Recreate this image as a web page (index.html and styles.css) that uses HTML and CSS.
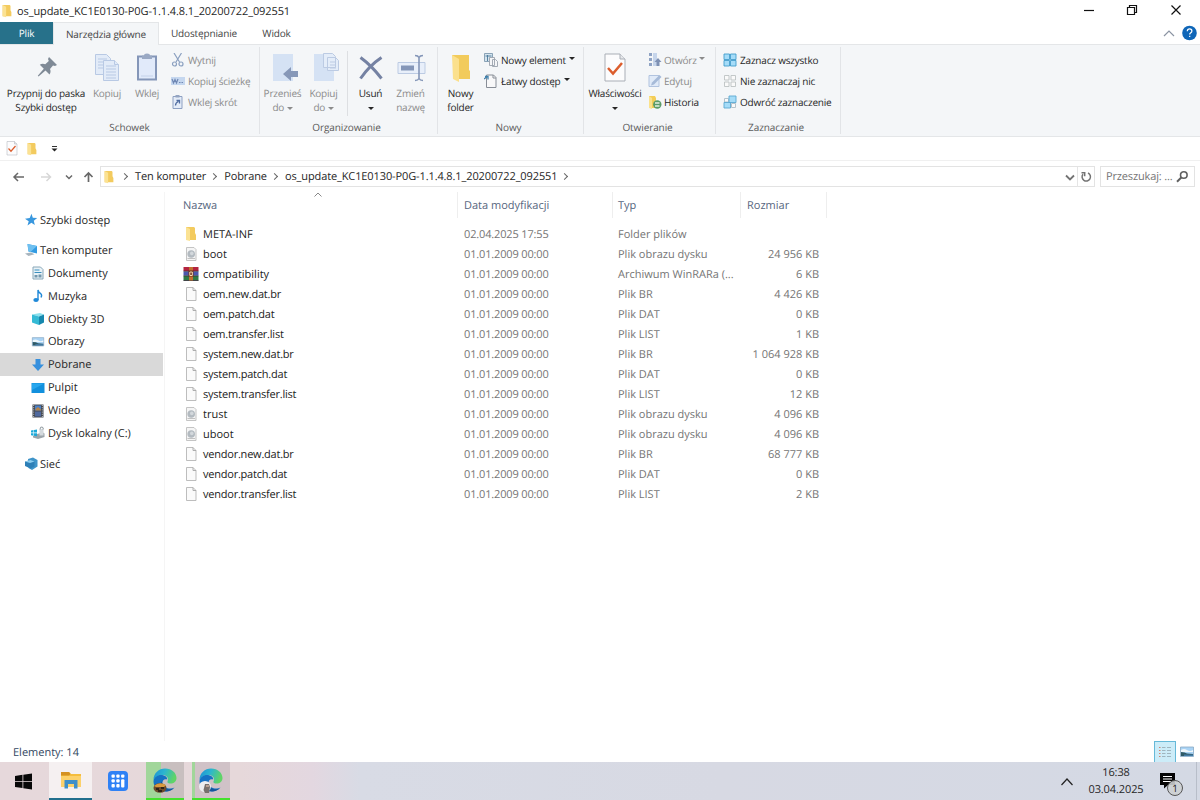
FILE: index.html
```html
<!DOCTYPE html>
<html lang="pl">
<head>
    <meta charset="UTF-8">
    <meta name="viewport" content="width=device-width, initial-scale=1.0">
    <title>os_update_KC1E0130-P0G-1.1.4.8.1_20200722_092551</title>
    <link rel="stylesheet" href="styles.css">
</head>
<body>
    <!-- Shared icons -->
    <svg class="sprites" width="0" height="0">
        <linearGradient id="edgeTop" x1="0" y1="0" x2="1" y2=".3">
            <stop offset="0" stop-color="#1c8fd6"/>
            <stop offset=".5" stop-color="#2cb5cf"/>
            <stop offset="1" stop-color="#5fd467"/>
        </linearGradient>
        <symbol id="folder" viewBox="0 0 16 16">
            <path d="M3 1h8l1 1v5l1 2v5H3z" fill="#f3cb5f"/>
            <path d="M3 1l4 2v12l-4-1z" fill="#fbe293"/>
        </symbol>
        <symbol id="file" viewBox="0 0 16 16">
            <path d="M3.500 1.500h6.500l3 3v10h-9.500z" fill="#fafafa" stroke="#b5b5b5" stroke-width=".9"/>
            <path d="M10 1.500v3h3" fill="none" stroke="#a5a5a5" stroke-width=".9"/>
        </symbol>
        <symbol id="disc" viewBox="0 0 16 16">
            <path d="M3.500 1.500h7.500l2 2v11h-9.500z" fill="#f5f5f5" stroke="#bdbdbd" stroke-width=".9"/>
            <circle cx="8.200" cy="8" r="3.800" fill="#b3bac0"/>
            <circle cx="8.800" cy="7.400" r="1.800" fill="#d3d8dc"/>
            <path d="M4.500 12.500h7.500" stroke="#c2c2c2"/>
        </symbol>
        <symbol id="rar" viewBox="0 0 16 16">
            <path d="M.5 1h15v4H.5z" fill="#b4243f"/>
            <path d="M.5 5.500h15v4H.5z" fill="#4a58ad"/>
            <path d="M.5 10h15v4.500H.5z" fill="#2f7a44"/>
            <path d="M.5 5.200h15M.5 9.800h15M.5 14.500h15" stroke="#2b2530" stroke-width=".8"/>
            <path d="M6 1h4v13.500H6z" fill="#c2702f"/>
            <path d="M5.500 4.500h5v6h-5z" fill="#6b2d20"/>
            <path d="M6.800 6h2.500v3.500h-2.500z" fill="none" stroke="#f7dfae"/>
        </symbol>
        <symbol id="picture" viewBox="0 0 16 16">
            <path d="M1.500 3h13v9.500h-13z" fill="#a9d3f5" stroke="#8aa9c4" stroke-width=".8"/>
            <path d="M2 6q3-2 6 0t6 0v2H2z" fill="#eef6fb"/>
            <path d="M2 8q4 0 6 1.500l6 .5v2H2z" fill="#2f5a66"/>
            <path d="M5 11.200h9" stroke="#4d8bc4"/>
        </symbol>
        <symbol id="doc-check" viewBox="0 0 24 30">
            <path d="M2 1h15l5 5v22H2z" fill="#fcfcfd" stroke="#a9aeb6" stroke-width="1"/>
            <path d="M17 1v5h5" fill="#e6e8eb" stroke="#a9aeb6"/>
            <path d="M5 15l5 5.500L19 10" fill="none" stroke="#dc5d2d" stroke-width="2.500"/>
        </symbol>
        <symbol id="edge" viewBox="0 0 24 24">
            <path d="M.5 12C.5 5 6 .5 12 .5c7 0 11.500 4.500 11.500 9.500 0 3.500-2.500 5.500-6 5.500-3 0-3.500-1.200-2.700-2.700C16 9 12.500 6.500 8.500 7 4.500 7.500 2 9.500.5 12z" fill="url(#edgeTop)"/>
            <path d="M.5 13C1 9 5 6.500 9 7c3.500.5 5.500 2.500 5.200 4.500C11 10.500 9 13 9.500 15.500c.7 3.500 4 5 8 5 1.500 0 2.800-.3 4-.9C19.500 22 16 23.500 12 23.500 5.500 23.500.2 19 .5 13z" fill="#1572c4"/>
            <path d="M9.200 13c-1.500 4.500 2.500 8.500 8.300 8.300 1.500 0 2.800-.5 4-1.700-2 2.700-5.500 3.900-8.500 3.900-5-.7-7.500-6.500-3.800-10.500z" fill="#16559a"/>
        </symbol>
    </svg>

    <div class="window">
        <header class="titlebar">
            <svg class="title-icon" width="14" height="14"><use href="#folder"/></svg>
            <span class="title">os_update_KC1E0130-P0G-1.1.4.8.1_20200722_092551</span>
            <svg class="controls" width="112" height="22" viewBox="0 0 112 22" fill="none" stroke="#111">
                <path d="M1 10.500h10" stroke-width="1.200"/>
                <path d="M44.500 7.500h7v7h-7zM46.500 7.500v-2h7v7h-2" stroke-width="1.200"/>
                <path d="M88.500 5.500l9 9M97.500 5.500l-9 9" stroke-width="1.200"/>
            </svg>
        </header>

        <nav class="tabs">
            <span class="tab tab-file">Plik</span>
            <span class="tab tab-active">Narzędzia główne</span>
            <span class="tab tab-share">Udostępnianie</span>
            <span class="tab tab-view">Widok</span>
            <svg class="tab-tools" width="36" height="18" viewBox="0 0 36 18">
                <path d="M1 12l5-5 5 5" fill="none" stroke="#8b94a3" stroke-width="1.200"/>
                <circle cx="26.500" cy="9" r="7.300" fill="#0f66b8"/>
                <path d="M24.300 7.300q0-2.500 2.300-2.500t2.300 2.200q0 1.300-1.300 1.900-.9.500-.9 1.600M26.700 11.800v1.300" fill="none" stroke="#fff" stroke-width="1.200"/>
            </svg>
        </nav>

        <section class="ribbon">
            <div class="group clipboard">
                <div class="group-body">
                    <div class="big pin">
                        <svg width="32" height="34" viewBox="0 0 32 34">
                            <path d="M19 6l8 8-2 1-2-.5-3 3.500c1 2 .5 4-.5 5.500l-4-4-7 6-.7-.7 6-7-4-4c1.500-1.300 3.500-1.500 5.500-.6l3.500-3.200-.8-2z" fill="#7f8a96"/>
                        </svg>
                        <span>Przypnij do paska<br>Szybki dostęp</span>
                    </div>
                    <div class="big copy off">
                        <svg width="32" height="34" viewBox="0 0 32 34" fill="#e2ebf8" stroke="#b8c9e4">
                            <path d="M4.500 3.500h11l4 4v16h-15z"/>
                            <path d="M7 8h9M7 11h9M7 14h9M7 17h9"/>
                            <path d="M12.500 9.500h11l4 4v16h-15z"/>
                            <path d="M23.500 9.500v4h4M15 15h10M15 18h10M15 21h10M15 24h10M15 27h10"/>
                        </svg>
                        <span>Kopiuj</span>
                    </div>
                    <div class="big paste off">
                        <svg width="32" height="34" viewBox="0 0 32 34">
                            <path d="M7 5.500h18v23H7z" fill="#e1eafa" stroke="#8496b8" stroke-width="2"/>
                            <path d="M11 4.500h2q0-2 3-2t3 2h2v3.500H11z" fill="#9aa9c4"/>
                            <path d="M10 25h12" stroke="#c4d2ea"/>
                        </svg>
                        <span>Wklej</span>
                    </div>
                    <div class="stack">
                        <div class="small off">
                            <svg width="14" height="14" viewBox="0 0 14 14" fill="none" stroke="#8ba0c0" stroke-width="1.200">
                                <path d="M3 0l5.500 9M10.500 0L5 9"/><circle cx="3.500" cy="11" r="2"/><circle cx="10" cy="11" r="2"/>
                            </svg>
                            <span>Wytnij</span>
                        </div>
                        <div class="small off">
                            <svg width="14" height="14" viewBox="0 0 14 14">
                                <path d="M0 3h14v8H0z" fill="#c5d7ef"/>
                                <path d="M1 5l1.500 4L4 5.500 5.500 9 7 5M8 8.500h1.500M10.500 8.500H12" fill="none" stroke="#7088b4" stroke-width="1.200"/>
                            </svg>
                            <span>Kopiuj ścieżkę</span>
                        </div>
                        <div class="small off">
                            <svg width="14" height="14" viewBox="0 0 14 14">
                                <path d="M2 1.500h9v12H2z" fill="#e4ecf8" stroke="#8da0c2"/>
                                <path d="M4.500 0h4v2.500h-4z" fill="#94a5c2"/>
                                <path d="M4.500 10.500q0-3 3-4M5.500 5.500h3v3" fill="none" stroke="#4e6b9f" stroke-width="1.300"/>
                            </svg>
                            <span>Wklej skrót</span>
                        </div>
                    </div>
                </div>
                <div class="group-name">Schowek</div>
            </div>

            <div class="group organize">
                <div class="group-body">
                    <div class="big move off">
                        <svg width="32" height="34" viewBox="0 0 32 34">
                            <path d="M6 3h20v27H6z" fill="#d5e2f4"/>
                            <path d="M16 23l8-7v4h7v6h-7v4z" fill="#8798b8"/>
                        </svg>
                        <span>Przenieś<br>do <i class="caret"></i></span>
                    </div>
                    <div class="big copyto off">
                        <svg width="32" height="34" viewBox="0 0 32 34">
                            <path d="M6 3h20v27H6z" fill="#d5e2f4"/>
                            <path d="M15.500 2.500h9l3 3v11h-12zM19.500 6.500h8l3 3v10h-11z" fill="#e4edf9" stroke="#bccbe3"/>
                            <path d="M22 11h6M22 14h6M22 17h6" stroke="#bccbe3"/>
                        </svg>
                        <span>Kopiuj<br>do <i class="caret"></i></span>
                    </div>
                    <div class="divider"></div>
                    <div class="big delete">
                        <svg width="32" height="34" viewBox="0 0 32 34">
                            <path d="M5.500 6.500q11 8 21 21M26.500 6.500q-12 8-21 21" fill="none" stroke="#7582a3" stroke-width="3"/>
                        </svg>
                        <span>Usuń<br><i class="caret"></i></span>
                    </div>
                    <div class="big rename off">
                        <svg width="32" height="34" viewBox="0 0 32 34">
                            <path d="M3 11.500h27v11H3z" fill="#e8effa" stroke="#bccbe3"/>
                            <path d="M6 14.500h13v5H6z" fill="#8496b8"/>
                            <path d="M20 4.500q3 0 4 2 1-2 4-2M24 6.500v21M20 29.500q3 0 4-2 1 2 4 2" fill="none" stroke="#8496b8" stroke-width="1.600"/>
                        </svg>
                        <span>Zmień<br>nazwę</span>
                    </div>
                </div>
                <div class="group-name">Organizowanie</div>
            </div>

            <div class="group new">
                <div class="group-body">
                    <div class="big newfolder">
                        <svg width="32" height="34" viewBox="0 0 32 34">
                            <path d="M7 4h17v15l1 1v8H12z" fill="#f2cb5c"/>
                            <path d="M7 4l7 4v23l-6-3z" fill="#fbe08c"/>
                        </svg>
                        <span>Nowy<br>folder</span>
                    </div>
                    <div class="stack">
                        <div class="small">
                            <svg width="14" height="14" viewBox="0 0 14 14" stroke-width=".9">
                                <path d="M.5.5h8v8h-8z" fill="#d5e4ee" stroke="#7f9bb0"/>
                                <path d="M1.500 3h6M3.500 2v6" stroke="#4b7898"/>
                                <path d="M5.500 4.500h5v8h-5zM8.500 6.500h3l2 2v5h-5z" fill="#f5f6f8" stroke="#9ba3ad"/>
                            </svg>
                            <span>Nowy element</span><i class="caret"></i>
                        </div>
                        <div class="small">
                            <svg width="14" height="14" viewBox="0 0 14 14">
                                <path d="M2.500 1h7l2.500 2.500v10H2.500z" fill="#f8f8f9" stroke="#888e97"/>
                                <path d="M9 1v3h3" fill="none" stroke="#888e97"/>
                                <path d="M0 5l4-3M1 2.500h3v3" fill="none" stroke="#3f81ac" stroke-width="1.300"/>
                            </svg>
                            <span>Łatwy dostęp</span><i class="caret"></i>
                        </div>
                    </div>
                </div>
                <div class="group-name">Nowy</div>
            </div>

            <div class="group open">
                <div class="group-body">
                    <div class="big props">
                        <svg width="24" height="34" viewBox="0 0 24 30"><use href="#doc-check"/></svg>
                        <span>Właściwości<br><i class="caret"></i></span>
                    </div>
                    <div class="stack">
                        <div class="small off">
                            <svg width="14" height="14" viewBox="0 0 14 14">
                                <path d="M1 0h3v3H1zM1 5h3v3H1zM1 10h3v3H1z" fill="#8fa3c4"/>
                                <path d="M5 0h4v13H5z" fill="#c6d5eb"/>
                                <path d="M10 5l3.500 4h-2v4h-3V9h-2z" fill="#7e91b4"/>
                            </svg>
                            <span>Otwórz</span><i class="caret"></i>
                        </div>
                        <div class="small off">
                            <svg width="14" height="14" viewBox="0 0 14 14">
                                <path d="M1 1.500h10v11H1z" fill="#e0eaf8" stroke="#b1c3df"/>
                                <path d="M3 11.500l1-3 7.500-7.500 2 2L6 10.500z" fill="#a6bad8"/>
                            </svg>
                            <span>Edytuj</span>
                        </div>
                        <div class="small">
                            <svg width="14" height="14" viewBox="0 0 14 14">
                                <path d="M1 1h6l1 2v10H1z" fill="#f3cd58"/>
                                <path d="M1 1l3 2v11l-3-1z" fill="#fbe28c"/>
                                <circle cx="9.300" cy="9.500" r="4.200" fill="#5a9b68"/>
                                <path d="M7 8h4.500M7 11h4.500" stroke="#e3efdf" stroke-width="1.300"/>
                            </svg>
                            <span>Historia</span>
                        </div>
                    </div>
                </div>
                <div class="group-name">Otwieranie</div>
            </div>

            <div class="group select">
                <div class="group-body">
                    <div class="stack">
                        <div class="small">
                            <svg width="14" height="14" viewBox="0 0 14 14"><path d="M1 1h5.500v5.500H1zM7.500 1H13v5.500H7.500zM1 7.500h5.500V13H1zM7.500 7.500H13V13H7.500z" fill="#a5dcf8" stroke="#449dcc" stroke-width=".9"/></svg>
                            <span>Zaznacz wszystko</span>
                        </div>
                        <div class="small">
                            <svg width="14" height="14" viewBox="0 0 14 14"><path d="M1.500 1.500h4.500V6H1.500zM8 1.500h4.500V6H8zM1.500 8H6v4.500H1.500zM8 8h4.500v4.500H8z" fill="#fafafa" stroke="#bcc2c3" stroke-width=".9"/></svg>
                            <span>Nie zaznaczaj nic</span>
                        </div>
                        <div class="small">
                            <svg width="14" height="14" viewBox="0 0 14 14">
                                <path d="M1.500 3.500h4V7h-4zM8.500 8.500h4v4h-4z" fill="#fafafa" stroke="#b5c3cc"/>
                                <path d="M6 1h7v6.500H6zM1 7.500h6.500V13H1z" fill="#a5dcf8" stroke="#5ba8d1" stroke-width=".9"/>
                            </svg>
                            <span>Odwróć zaznaczenie</span>
                        </div>
                    </div>
                </div>
                <div class="group-name">Zaznaczanie</div>
            </div>
        </section>

        <div class="quickbar">
            <svg width="14" height="15" viewBox="0 0 24 30"><use href="#doc-check"/></svg>
            <svg width="16" height="14"><use href="#folder"/></svg>
            <svg width="7" height="6" viewBox="0 0 7 6"><path d="M1 .5h5" stroke="#333"/><path d="M.5 2.500h6l-3 3z" fill="#222"/></svg>
        </div>

        <div class="navbar">
            <svg class="nav-arrows" width="100" height="20" viewBox="0 0 100 20" fill="none" stroke="#686868" stroke-width="1.500">
                <path d="M14 10h10M18 6l-4 4 4 4"/>
                <path d="M41 10h9M46.500 6l4 4-4 4" stroke="#d7d7d7"/>
                <path d="M66 8.500l3 3 3-3"/>
                <path d="M88.500 15V6M84.500 10l4-4 4 4" stroke-width="1.700"/>
            </svg>
            <div class="address">
                <svg width="14" height="14"><use href="#folder"/></svg>
                <b class="chev"></b><span>Ten komputer</span>
                <b class="chev"></b><span>Pobrane</span>
                <b class="chev"></b><span>os_update_KC1E0130-P0G-1.1.4.8.1_20200722_092551</span>
                <b class="chev"></b>
                <svg class="address-tools" width="31" height="20" viewBox="0 0 31 20" fill="none" stroke="#737373" stroke-width="1.800">
                    <path d="M3 8.500l4 4 4-4"/>
                    <path d="M14.500 0v20" stroke="#e5e5e5" stroke-width="1"/>
                    <path d="M25 6a4.200 4.200 0 1 1-5 1.200M18.500 5.700h3.200v3.500" stroke-width="1.500"/>
                </svg>
            </div>
            <div class="search">
                <span>Przeszukaj: ...</span>
                <svg width="13" height="13" viewBox="0 0 13 13" fill="none" stroke="#606060"><circle cx="7.800" cy="5" r="3.300" stroke-width="1.600"/><path d="M5.500 7.300L1 11.800" stroke-width="2"/></svg>
            </div>
        </div>

        <main class="content">
            <aside class="sidebar">
                <div class="place root">
                    <svg width="14" height="14" viewBox="0 0 14 14"><path d="M7.500.8l1.300 4 4.400.1-3.400 2.800 1 4.300-3.400-2.300L3.500 12.500l1.200-4.300L1 5.800l4.700-.7z" fill="#3897de"/></svg>
                    <span>Szybki dostęp</span>
                </div>
                <div class="place root pc">
                    <svg width="14" height="14" viewBox="0 0 14 14"><path d="M3.500 1l9.500 2v7.500L4.500 8.500z" fill="#329be2"/><path d="M3.500 1l9.500 2-6.500 6-2-.5z" fill="#6fc0f0"/><path d="M1 10.500l6-1 3.500 1.800-6 1.700z" fill="#a8b4bd"/></svg>
                    <span>Ten komputer</span>
                </div>
                <div class="place">
                    <svg width="14" height="14" viewBox="0 0 14 14"><path d="M2 1h7.500L12 3.500V13H2z" fill="#e9f2f7" stroke="#89a7b8"/><path d="M3.500 4h5M3.500 6.500h7" stroke="#3a8fbe"/><path d="M3.500 9h3v2.500h-3zM7.500 8.500h3v3h-3z" fill="#7397ad"/></svg>
                    <span>Dokumenty</span>
                </div>
                <div class="place">
                    <svg width="14" height="14" viewBox="0 0 14 14"><ellipse cx="5" cy="11" rx="2.700" ry="2" fill="#2089d8"/><path d="M7 11V1q.5 2.500 2.800 3.700 1.500 1.500.2 3.800" fill="none" stroke="#2089d8" stroke-width="1.400"/></svg>
                    <span>Muzyka</span>
                </div>
                <div class="place">
                    <svg width="14" height="14" viewBox="0 0 14 14"><path d="M1 2.500l8-1.500 4 1.500-5 2z" fill="#8be0ed"/><path d="M1 2.500l7 2V13l-7-2.500z" fill="#35bad5"/><path d="M8 4.500l5-2v8L8 13z" fill="#1688ae"/></svg>
                    <span>Obiekty 3D</span>
                </div>
                <div class="place"><svg width="14" height="14"><use href="#picture"/></svg><span>Obrazy</span></div>
                <div class="place selected">
                    <svg width="14" height="14" viewBox="0 0 14 14"><path d="M4.500 1h5v5.500H13L7 13 1 6.500h3.500z" fill="#3790dd"/></svg>
                    <span>Pobrane</span>
                </div>
                <div class="place">
                    <svg width="14" height="14" viewBox="0 0 14 14"><path d="M.5 2h13v10H.5z" fill="#1290dd"/><path d="M1 2.500h12L1 9z" fill="#28a7ee"/></svg>
                    <span>Pulpit</span>
                </div>
                <div class="place">
                    <svg width="14" height="14" viewBox="0 0 14 14"><path d="M1.500.5h11v13h-11z" fill="#42474f"/><path d="M4 1.500h6v5H4z" fill="#4b80c6"/><path d="M4 7.500h6v5H4z" fill="#50699e"/><path d="M4.500 5L7 3l3 2.500v1H4.500z" fill="#b3834a"/><path d="M2.700 1v12M11.300 1v12" stroke="#c4c8cd" stroke-dasharray="1 1.200"/></svg>
                    <span>Wideo</span>
                </div>
                <div class="place">
                    <svg width="14" height="14" viewBox="0 0 14 14"><path d="M6 8l6-1.500 1.500 1V11L7 13l-5-1.500V10z" fill="#9ba4aa"/><path d="M8.500 3h4v6.500h-4z" fill="#d3d9dd"/><path d="M9 3.500q0-3 2-2.500t1 2.500" fill="none" stroke="#8e989e"/><path d="M0 4.500l2.500-.4v2.500H0zM3 4l3-.5v3H3zM0 7.200h2.500v2.500L0 9.300zM3 7.200h3v3L3 9.800z" fill="#1ba8d8"/></svg>
                    <span>Dysk lokalny (C:)</span>
                </div>
                <div class="place root net">
                    <svg width="14" height="14" viewBox="0 0 14 14"><path d="M4 2l5-1.500L13.500 3v6.500L8 13 4.500 11z" fill="#3f94c9"/><path d="M1 4.500L6.500 3l4 1.500v5l-4 2L1 9z" fill="#2d7fb7"/><path d="M1 4.500L6.500 3l4 1.500L6 6z" fill="#8bcdf0"/></svg>
                    <span>Sieć</span>
                </div>
            </aside>

            <section class="files">
                <div class="row head">
                    <span class="cell name">Nazwa<svg class="sort" width="8" height="5" viewBox="0 0 8 5"><path d="M.5 4.500L4 1l3.500 3.500" fill="none" stroke="#888"/></svg></span>
                    <span class="cell date">Data modyfikacji</span>
                    <span class="cell type">Typ</span>
                    <span class="cell size">Rozmiar</span>
                </div>
                <div id="fileList"></div>
            </section>
        </main>

        <footer class="status">
            <span>Elementy: 14</span>
            <div class="views">
                <span class="view view-on">
                    <svg width="14" height="14" viewBox="0 0 14 14"><path d="M1 2.500h1.500M1 5.500h1.500M1 8.500h1.500M1 11.500h1.500" stroke="#d0836f"/><path d="M4 2.500h3.500M4 5.500h3.500M4 8.500h3.500M4 11.500h3.500M9 2.500h4M9 5.500h4M9 8.500h4M9 11.500h4" stroke="#9fb5be"/></svg>
                </span>
                <span class="view"><svg width="16" height="16"><use href="#picture"/></svg></span>
            </div>
        </footer>
    </div>

    <div class="taskbar">
        <div class="task start">
            <svg width="17" height="17" viewBox="0 0 17 17"><path d="M0 3l7.500-1.200V8H0zM8.300 1.700L17 .4V8H8.300zM0 8.800h7.500V15L0 14zM8.300 8.800H17v7.700l-8.700-1.300z" fill="#080808"/></svg>
        </div>
        <div class="task explorer">
            <svg width="20" height="18" viewBox="0 0 20 18"><path d="M0 1h8l2 2h10v13H0z" fill="#f5bd3d"/><path d="M0 1h8l1.500 2-1.500 1.500H0z" fill="#d49122"/><path d="M0 5h20v11H0z" fill="#fcd16b"/><path d="M3.500 9h13v8.500h-3.500V13H7v4.500H3.500z" fill="#3e8fc9"/></svg>
        </div>
        <div class="task apps">
            <svg width="20" height="20" viewBox="0 0 20 20"><rect width="20" height="20" rx="4" fill="#2f81f5"/><g fill="#fff"><rect x="3.500" y="3.500" width="3.300" height="3.300" rx="1"/><rect x="8.300" y="3.500" width="3.300" height="3.300" rx="1"/><rect x="13.100" y="3.500" width="3.300" height="3.300" rx="1"/><rect x="3.500" y="8.300" width="3.300" height="3.300" rx="1"/><rect x="8.300" y="8.300" width="3.300" height="3.300" rx="1"/><rect x="3.500" y="13.100" width="3.300" height="3.300" rx="1"/><rect x="8.300" y="13.100" width="3.300" height="3.300" rx="1"/><rect x="13.100" y="8.300" width="3.300" height="8.100" rx="1"/></g></svg>
        </div>
        <div class="task browser busy">
            <svg width="24" height="24"><use href="#edge"/></svg>
            <svg class="badge" width="14" height="12" viewBox="0 0 14 12"><ellipse cx="7" cy="7" rx="6.500" ry="4.800" fill="#6e4b2b"/><path d="M1 5q5-5 12-1l-2 2H3z" fill="#d99a3e"/><path d="M3 8h3M8 7h3M5 10h4" stroke="#1d1714" stroke-width="1.500"/></svg>
        </div>
        <div class="task browser second">
            <svg width="24" height="24"><use href="#edge"/></svg>
            <svg class="badge" width="14" height="12" viewBox="0 0 14 12"><ellipse cx="6" cy="5.500" rx="6" ry="5.500" fill="#eceef0"/><path d="M6 3h4l1 3-1 6H6L4.500 9z" fill="#77706c"/><path d="M7 4h3v2H7z" fill="#b79f91"/></svg>
        </div>
        <div class="tray">
            <svg width="14" height="9" viewBox="0 0 14 9"><path d="M1.500 8L7 2l5.500 6" fill="none" stroke="#222" stroke-width="1.200"/></svg>
            <div class="clock"><span>16:38</span><span>03.04.2025</span></div>
            <div class="notify">
                <svg width="16" height="16" viewBox="0 0 16 16"><path d="M0 0h15v12H8l-4 3.500V12H0z" fill="#050505"/><path d="M3 3.500h9M3 6h9M3 8.500h9" stroke="#fff"/></svg>
                <span class="count">1</span>
            </div>
        </div>
    </div>

    <script>
        // icon, name, date, type, size
        const files = [
            ['folder', 'META-INF', '02.04.2025 17:55', 'Folder plików', ''],
            ['disc', 'boot', '01.01.2009 00:00', 'Plik obrazu dysku', '24 956 KB'],
            ['rar', 'compatibility', '01.01.2009 00:00', 'Archiwum WinRARa (...', '6 KB'],
            ['file', 'oem.new.dat.br', '01.01.2009 00:00', 'Plik BR', '4 426 KB'],
            ['file', 'oem.patch.dat', '01.01.2009 00:00', 'Plik DAT', '0 KB'],
            ['file', 'oem.transfer.list', '01.01.2009 00:00', 'Plik LIST', '1 KB'],
            ['file', 'system.new.dat.br', '01.01.2009 00:00', 'Plik BR', '1 064 928 KB'],
            ['file', 'system.patch.dat', '01.01.2009 00:00', 'Plik DAT', '0 KB'],
            ['file', 'system.transfer.list', '01.01.2009 00:00', 'Plik LIST', '12 KB'],
            ['disc', 'trust', '01.01.2009 00:00', 'Plik obrazu dysku', '4 096 KB'],
            ['disc', 'uboot', '01.01.2009 00:00', 'Plik obrazu dysku', '4 096 KB'],
            ['file', 'vendor.new.dat.br', '01.01.2009 00:00', 'Plik BR', '68 777 KB'],
            ['file', 'vendor.patch.dat', '01.01.2009 00:00', 'Plik DAT', '0 KB'],
            ['file', 'vendor.transfer.list', '01.01.2009 00:00', 'Plik LIST', '2 KB']
        ];

        document.getElementById('fileList').innerHTML = files.map(function(f) {
            return `<div class="row is-${f[0]}">
                <span class="cell name"><svg width="16" height="16"><use href="#${f[0]}"/></svg>${f[1]}</span>
                <span class="cell date">${f[2]}</span>
                <span class="cell type">${f[3]}</span>
                <span class="cell size">${f[4]}</span>
            </div>`;
        }).join('');
    </script>
</body>
</html>
```
FILE: styles.css
```css
* {
    box-sizing: border-box;
}

body {
    margin: 0;
    width: 1200px;
    height: 800px;
    overflow: hidden;
    display: flex;
    flex-direction: column;
    background: #fff;
    color: #262626;
    font-family: "Open Sans", "Noto Sans", sans-serif;
    font-size: 11px;
    line-height: 14px;
    white-space: nowrap;
    text-rendering: geometricPrecision;
}

svg {
    display: block;
    flex: none;
}

.sprites {
    position: absolute;
}

.window {
    height: 762px;
    display: flex;
    flex-direction: column;
}

/* Title bar and tabs */
.titlebar {
    height: 22px;
    display: flex;
    align-items: center;
}

.title {
    margin-left: 3px;
    padding-top: 2px;
    letter-spacing: -0.1px;
}

.controls {
    margin-left: auto;
    margin-right: 5px;
}

.tabs {
    height: 23px;
    display: flex;
    align-items: stretch;
    border-bottom: 1px solid #e4e6e8;
    font-size: 10px;
    letter-spacing: -0.15px;
}

.tab {
    display: flex;
    align-items: center;
    justify-content: center;
    color: #444;
}

.tab-file {
    width: 53px;
    height: 22px;
    background: #27718a;
    color: #fff;
}

.tab-active {
    width: 106px;
    height: 23px;
    background: #f4f6f8;
    border: 1px solid #e4e6e8;
    border-bottom: 0;
}

.tab-share {
    width: 90px;
}

.tab-view {
    width: 55px;
}

.tab-tools {
    margin: 2px 1px 0 auto;
}

/* Ribbon */
.ribbon {
    height: 92px;
    display: flex;
    padding: 2px 0;
    background: #f4f6f8;
    border-bottom: 1px solid #e4e6e8;
    font-size: 10px;
    letter-spacing: -0.2px;
}

.group {
    display: flex;
    flex-direction: column;
    border-right: 1px solid #e2e4e7;
}

.group-body {
    height: 71px;
    flex: none;
    display: flex;
}

.group-name {
    padding-top: 1px;
    text-align: center;
    letter-spacing: -0.1px;
    line-height: 16px;
    color: #5a5a5a;
}

.clipboard { width: 260px; }
.organize { width: 178px; }
.new { width: 146px; }
.open { width: 132px; }
.select { width: 125px; }

.organize .group-name,
.new .group-name,
.open .group-name,
.select .group-name {
    padding-right: 4px;
}

.big {
    display: flex;
    flex-direction: column;
    align-items: center;
    padding-top: 4px;
    text-align: center;
}

.big span {
    margin-top: 1px;
}

.pin { width: 92px; }
.copy { width: 30px; }
.paste { width: 50px; }
.move { width: 45px; }
.copyto { width: 37px; }
.delete { width: 45px; }
.rename { width: 35px; }
.newfolder { width: 45px; }
.props { width: 62px; }

.off {
    color: #8b8b8b;
}

.divider {
    width: 1px;
    margin: 4px 0 2px 5px;
    background: #dddfe2;
}

.stack {
    display: flex;
    flex-direction: column;
    padding-top: 2px;
}

.small {
    height: 21px;
    display: flex;
    align-items: center;
    gap: 3px;
}

.clipboard .stack {
    margin-left: -1px;
}

.new .stack {
    padding-left: 1px;
}

.open .stack {
    padding-left: 2px;
}

.open .small {
    gap: 2px;
}

.select .stack {
    padding-left: 7px;
}

.caret {
    display: inline-block;
    border: 3px solid transparent;
    border-top-color: currentColor;
    border-bottom: 0;
    vertical-align: middle;
}

.small .caret {
    margin-top: -2px;
}

/* Quick access toolbar */
.quickbar {
    height: 24px;
    display: flex;
    align-items: center;
    gap: 5px;
    padding-left: 5px;
    border-bottom: 1px solid #f0f0f0;
}

.quickbar svg:last-child {
    margin-left: 6px;
}

/* Address bar */
.navbar {
    height: 31px;
    display: flex;
    align-items: center;
}

.address {
    width: 995px;
    height: 21px;
    display: flex;
    align-items: center;
    border: 1px solid #e3e3e3;
    letter-spacing: -0.11px;
}

.address > svg:first-child {
    margin: 0 6px 0 1px;
}

.chev {
    width: 5px;
    height: 5px;
    margin-right: 8px;
    border: solid #666;
    border-width: 1.500px 1.500px 0 0;
    transform: rotate(45deg);
}

.address span {
    margin-right: 5px;
}

.address-tools {
    margin-left: auto;
}

.search {
    width: 95px;
    height: 21px;
    margin-left: 5px;
    padding: 0 5px;
    display: flex;
    align-items: center;
    justify-content: space-between;
    border: 1px solid #e3e3e3;
    color: #757575;
    letter-spacing: -0.15px;
}

/* Content */
.content {
    flex: 1;
    display: flex;
    min-height: 0;
}

.sidebar {
    width: 165px;
    padding-top: 17px;
    border-right: 1px solid #f5f5f5;
}

.place {
    width: 163px;
    height: 22.900px;
    display: flex;
    align-items: center;
    gap: 3px;
    padding-left: 31px;
}

.place span {
    padding-top: 1px;
}

.root {
    padding-left: 24px;
    gap: 2px;
}

.pc {
    margin-top: 7px;
}

.net {
    margin-top: 8px;
}

.selected {
    background: #d9d9d9;
}

.row {
    height: 20px;
    display: grid;
    grid-template-columns: 293px 155px 128px 86px;
    align-items: center;
    color: #757575;
}

.cell.name {
    display: flex;
    align-items: center;
    gap: 4px;
    padding-left: 18px;
    color: #222;
}

.is-file .name {
    letter-spacing: -0.22px;
}

.row .name svg {
    margin-top: -3px;
}

.cell.date {
    padding-left: 6px;
}

.row:not(.head) .date {
    letter-spacing: -0.15px;
}

.cell.type {
    padding-left: 5px;
}

.cell.size {
    padding-right: 8px;
    text-align: right;
}

.row.head {
    height: 26px;
    margin-bottom: 7px;
}

.head .cell {
    position: relative;
    height: 26px;
    line-height: 28px;
    border-right: 1px solid #eee;
    color: #56667e;
}

.head .cell.name {
    padding-top: 2px;
}

.head .cell.size {
    padding-left: 6px;
    text-align: left;
}

.row .sort {
    position: absolute;
    left: 149px;
    top: 3px;
}

/* Status bar */
.status {
    height: 21px;
    display: flex;
    justify-content: space-between;
    padding-left: 13px;
    line-height: 23px;
    color: #33475f;
}

.views {
    display: flex;
    padding-right: 2px;
}

.view {
    width: 22px;
    height: 22px;
    display: flex;
    align-items: center;
    justify-content: center;
}

.view-on {
    background: #ccecf8;
    border: 1px solid #66b9d8;
}

/* Taskbar */
.taskbar {
    height: 38px;
    display: flex;
    background: linear-gradient(90deg, #e6d8db, #e6d8da 20%, #e3d7e0 26%, #d8dbe5 30%, #d7d9e3 60%, #d4d9e4);
}

.task {
    display: flex;
    align-items: center;
    justify-content: center;
}

.start { width: 46px; }

.explorer {
    width: 43px;
    margin-left: 3px;
    background: #f5f0f1;
    border-bottom: 2px solid #22708e;
}

.apps { width: 52px; }

.browser {
    position: relative;
    width: 38px;
    background: #d0c2c7;
    border-bottom: 2px solid #44e02c;
}

.busy {
    margin-left: 2px;
    background: linear-gradient(90deg, #a1d69a 40%, #c8bfbf 40%);
}

.second {
    margin-left: 8px;
    background: linear-gradient(90deg, #a1d69a 3px, #d0c2c7 3px);
}

.badge {
    position: absolute;
    left: 7px;
    bottom: 5px;
}

.tray {
    display: flex;
    align-items: center;
    margin-left: auto;
}

.clock {
    width: 56px;
    margin: 0 16px 0 14px;
    display: flex;
    flex-direction: column;
    align-items: center;
    line-height: 17px;
    letter-spacing: -0.1px;
}

.notify {
    position: relative;
    width: 37px;
    height: 38px;
    padding-top: 11px;
    border-right: 1px solid #b8bec9;
    margin-right: 3px;
}

.count {
    position: absolute;
    left: 7px;
    top: 18px;
    width: 16px;
    height: 16px;
    border: 1px solid #555;
    border-radius: 50%;
    background: rgba(205, 207, 210, 0.9);
    font-size: 10px;
    line-height: 14px;
    text-align: center;
}
```
